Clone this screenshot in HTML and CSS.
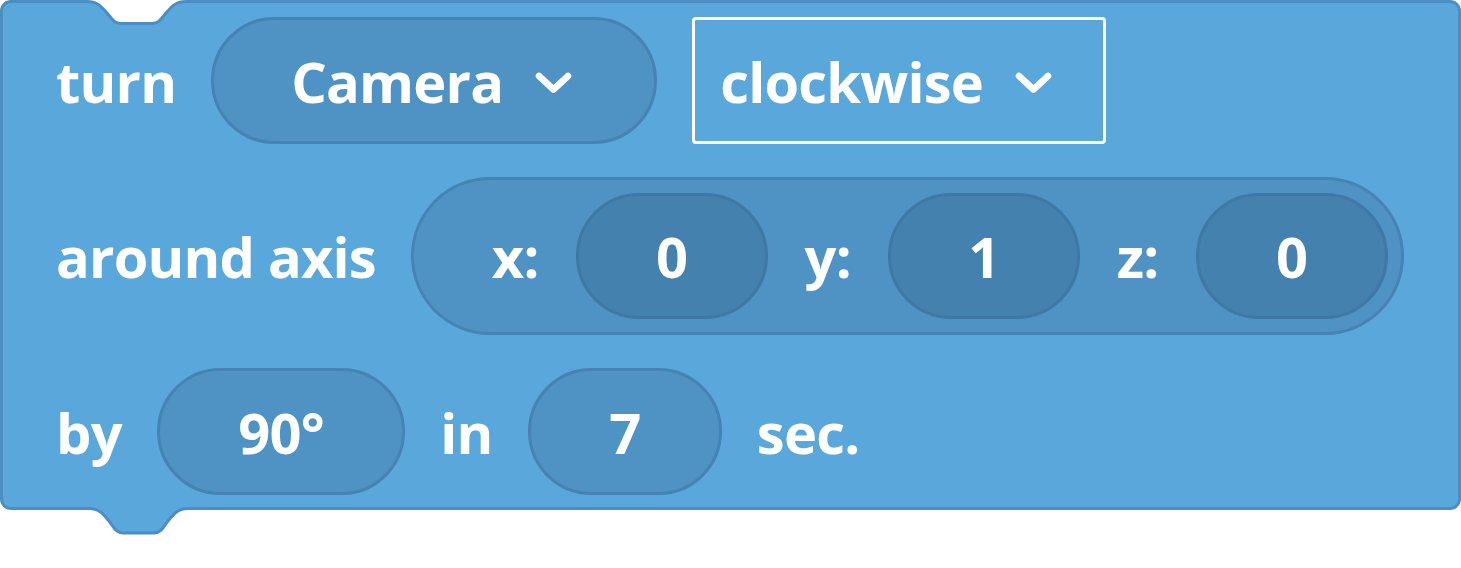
FILE: index.html
```html
<!DOCTYPE html>
<html>
<head>
<meta charset="utf-8">
<link rel="stylesheet" href="styles.css">
</head>
<body>
<div class="canvas">
<div class="block">
  <svg class="notch" width="99" height="28" viewBox="0 0 99 28">
    <path class="notch-fill" d="M0,0 L0,1.5 C10,1.5 14,6 20,13 C25,19 27,23.5 34,23.5 H65 C72,23.5 74,19 79,13 C85,6 89,1.5 99,1.5 L99,0 Z"/>
    <path class="edge" d="M0,1.5 C10,1.5 14,6 20,13 C25,19 27,23.5 34,23.5 H65 C72,23.5 74,19 79,13 C85,6 89,1.5 99,1.5"/>
  </svg>
  <svg class="tab" width="99" height="30" viewBox="0 0 99 30">
    <path class="tab-fill" d="M0,0 L0,1.5 C10,1.5 14,6.5 20,14 C25,20.5 27,26 34,26 H65 C72,26 74,20.5 79,14 C85,6.5 89,1.5 99,1.5 L99,0 Z"/>
    <path class="edge" d="M0,1.5 C10,1.5 14,6.5 20,14 C25,20.5 27,26 34,26 H65 C72,26 74,20.5 79,14 C85,6.5 89,1.5 99,1.5"/>
  </svg>

  <div class="row">
    <span class="label">turn</span>
    <div class="dropdown pill">
      <span>Camera</span>
      <svg class="chev" width="37" height="22" viewBox="0 0 37 22"><polyline points="4,4 18.5,17.5 33,4"/></svg>
    </div>
    <div class="dropdown box">
      <span>clockwise</span>
      <svg class="chev" width="37" height="22" viewBox="0 0 37 22"><polyline points="4,4 18.5,17.5 33,4"/></svg>
    </div>
  </div>

  <div class="row">
    <span class="label">around axis</span>
    <div class="vec">
      <span class="label">x:</span><span class="num inner">0</span>
      <span class="label">y:</span><span class="num inner">1</span>
      <span class="label">z:</span><span class="num inner">0</span>
    </div>
  </div>

  <div class="row">
    <span class="label">by</span>
    <span class="num">90°</span>
    <span class="label">in</span>
    <span class="num">7</span>
    <span class="label">sec.</span>
  </div>
</div>
</div>
</body>
</html>
```

FILE: styles.css
```css
html, body {
  margin: 0;
  padding: 0;
  background: #ffffff;
}

body {
  min-height: 568px;
  font-family: "Open Sans", "Noto Sans", sans-serif;
  font-weight: 700;
  font-size: 56px;
  letter-spacing: -0.8px;
  color: #ffffff;
}

.canvas {
  padding-bottom: 58px;
}

.block {
  position: relative;
  box-sizing: border-box;
  height: 510px;
  background: #59a7db;
  border: 3px solid #4b8ec3;
  border-radius: 11px;
  padding: 14px 52px 12px 53px;
  display: flex;
  flex-direction: column;
  gap: 33px;
}

.notch {
  position: absolute;
  top: -3px;
  left: 84px;
  display: block;
  z-index: 1;
}

.tab {
  position: absolute;
  bottom: -30px;
  left: 86px;
  display: block;
  z-index: 1;
}

.notch-fill { fill: #ffffff; }
.tab-fill { fill: #59a7db; }
.edge {
  fill: none;
  stroke: #4b8ec3;
  stroke-width: 3;
}

.row {
  display: flex;
  align-items: center;
  gap: 35px;
}

.label {
  line-height: 1;
  white-space: nowrap;
}

.dropdown {
  box-sizing: border-box;
  height: 127px;
  display: flex;
  align-items: center;
  gap: 32px;
  line-height: 1;
}

.pill {
  background: #4f93c4;
  border: 3px solid #4682b3;
  border-radius: 64px;
  padding: 0 82px 0 77px;
}

.box {
  border: 3px solid #ffffff;
  border-radius: 4px;
  padding: 0 51px 0 25px;
}

.chev {
  display: block;
  margin-top: 4px;
  filter: blur(0.4px);
}

.chev polyline {
  fill: none;
  stroke: #ffffff;
  stroke-width: 6.5;
  stroke-linecap: round;
  stroke-linejoin: round;
}

.vec {
  box-sizing: border-box;
  height: 158px;
  display: flex;
  align-items: center;
  gap: 37px;
  background: #4f93c4;
  border: 3px solid #4682b3;
  border-radius: 80px;
  padding: 0 13px 0 78px;
}

.num {
  box-sizing: border-box;
  height: 127px;
  display: flex;
  align-items: center;
  justify-content: center;
  min-width: 192px;
  padding: 0 78.5px;
  line-height: 1;
  background: #4f93c4;
  border: 3px solid #4682b3;
  border-radius: 64px;
}

.num.inner {
  height: 126px;
  padding: 0 77px;
  background: #4481ae;
  border-color: #3f78a5;
}
```
